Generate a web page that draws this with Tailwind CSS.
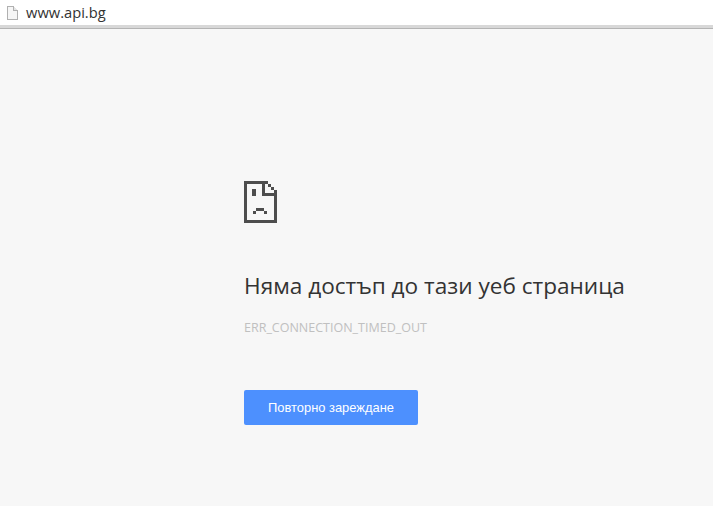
<!DOCTYPE html>
<html lang="bg">
<head>
    <meta charset="UTF-8">
    <title>www.api.bg</title>
    <script src="https://cdn.jsdelivr.net/npm/@tailwindcss/browser@4"></script>
</head>
<body class="bg-[#f7f7f7] font-['Open_Sans',sans-serif] h-[506px] overflow-hidden">
    <!-- Address bar -->
    <div class="h-[25px] bg-white flex items-center pl-[7px] gap-[8px]">
        <svg width="11" height="14" viewBox="0 0 11 14" fill="none" stroke="#b0b0b0" stroke-width="1" shape-rendering="crispEdges">
            <path d="M.5 .5H6.5L10.5 4.5V13.5H.5Z" fill="#f6f6f6"/>
            <path d="M6.5 .5V4.5H10.5" fill="#e4e4e4"/>
        </svg>
        <span class="text-[14.7px] text-[#333] leading-none">www.api.bg</span>
    </div>
    <div class="h-[4px] bg-[#d8d8d8] border-b border-[#b4b4b4]"></div>

    <!-- Error page -->
    <main class="pl-[244px] pt-[152px]">
        <svg width="33" height="42" viewBox="0 0 33 42" class="block" shape-rendering="crispEdges" fill="#4d4d4d">
            <!-- outline -->
            <rect x="0" y="0" width="24" height="3"/>
            <rect x="0" y="0" width="3" height="42"/>
            <rect x="0" y="39" width="33" height="3"/>
            <rect x="30" y="9" width="3" height="33"/>
            <rect x="24" y="3" width="3" height="3"/>
            <rect x="27" y="6" width="3" height="3"/>
            <!-- fold -->
            <rect x="18" y="3" width="3" height="12"/>
            <rect x="18" y="12" width="15" height="3"/>
            <!-- face -->
            <rect x="8" y="8" width="4" height="7"/>
            <rect x="12" y="27" width="8" height="3"/>
            <rect x="9" y="30" width="3" height="3"/>
            <rect x="20" y="30" width="3" height="3"/>
        </svg>
        <h1 class="mt-[48px] text-[22.6px] leading-[30px] text-[#333] font-normal">Няма достъп до тази уеб страница</h1>
        <p class="mt-[19px] text-[12.5px] leading-[16px] text-[#c0c0c0]">ERR_CONNECTION_TIMED_OUT</p>
        <button class="mt-[54px] w-[174px] h-[35px] bg-[#4d90fe] rounded-[2px] text-white text-[12.9px] font-['Liberation_Sans',sans-serif]">Повторно зареждане</button>
    </main>
</body>
</html>
